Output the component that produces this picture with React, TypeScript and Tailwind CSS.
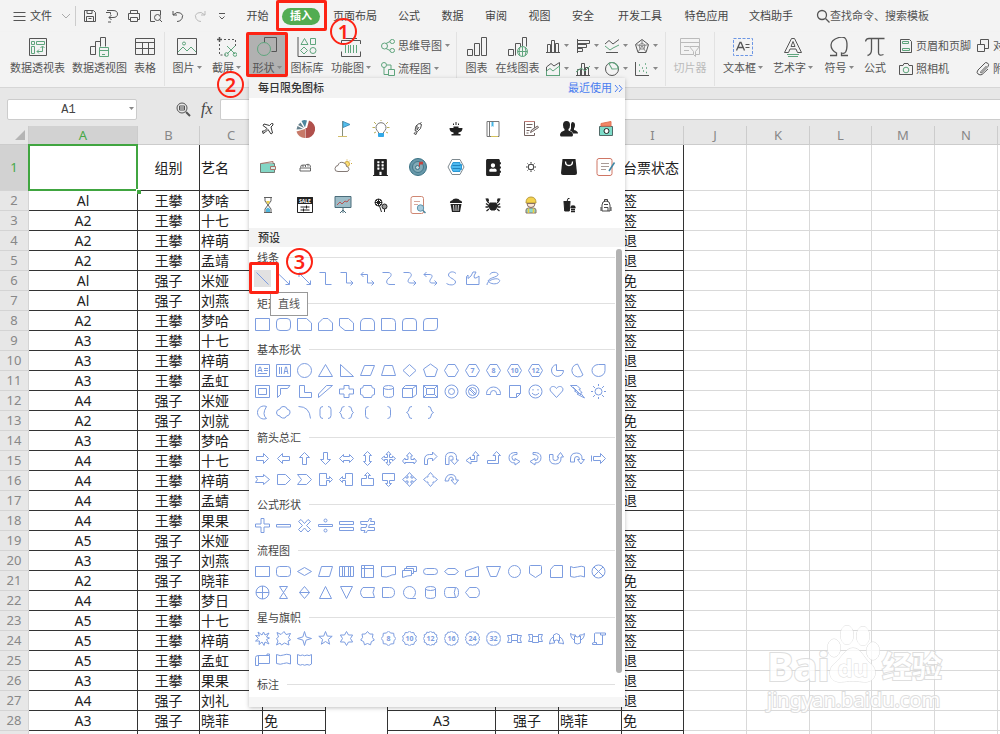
import type { ReactNode } from 'react';
import clsx from 'clsx';
import { FaAddressBook, FaBuilding } from 'react-icons/fa';

const DARK = '#555';
const GREEN = '#5fa57d';
const BLUE = '#7d9de0';

function Icon({ size = 20, color = DARK, children }: { size?: number; color?: string; children: ReactNode }) {
  return (
    <svg width={size} height={size} viewBox={`0 0 ${size} ${size}`} fill="none" stroke={color} className="shrink-0" aria-hidden="true">
      {children}
    </svg>
  );
}

function Caret() {
  return (
    <svg width="5" height="4" viewBox="0 0 5 4" className="shrink-0" aria-hidden="true">
      <path d="M0 0h5L2.5 3z" fill="#888" />
    </svg>
  );
}

function Step({ n, className }: { n: number; className: string }) {
  return (
    <span
      className={clsx(
        'absolute z-30 flex size-[27px] items-center justify-center rounded-full border-2 border-[#fd2314] text-xl leading-none font-semibold text-[#fd2314]',
        className,
      )}
    >
      {n}
    </span>
  );
}

/* ---------- shape gallery ---------- */

type Shape = { d: string; t?: string; r?: number };

const s = (d: string, t?: string): Shape => ({ d, t });
const turn = (d: string, r: number): Shape => ({ d, r });

function star(points: number, outer: number, inner: number) {
  const out: string[] = [];
  for (let i = 0; i < points * 2; i++) {
    const radius = i % 2 ? inner : outer;
    const a = (Math.PI * i) / points - Math.PI / 2;
    out.push(`${(7.5 + radius * Math.cos(a)).toFixed(1)} ${(7.5 + radius * Math.sin(a)).toFixed(1)}`);
  }
  return `M${out.join('L')}z`;
}

const circle = (r: number, cx = 7.5, cy = 7.5) => `M${cx - r} ${cy}a${r} ${r} 0 1 0 ${r * 2} 0a${r} ${r} 0 1 0 ${-r * 2} 0z`;

const RECT = 'M.5 1.5h14v12H.5z';
const ROUND = 'M4 1.5h7q3.5 0 3.5 3.5v5q0 3.5-3.5 3.5H4Q.5 13.5.5 10V5Q.5 1.5 4 1.5z';
const HEX = 'M4 1.5h7l3.5 6-3.5 6H4l-3.5-6z';
const ARROW = 'M1.5 5.5h7v-3l5 5-5 5v-3h-7z';
const DOUBLE = 'M.5 7.5l4-4v2h6v-2l4 4-4 4v-2h-6v2z';
const BEND = 'M1.5 13.5V9q0-5.500 5-5.500h3V1l4.500 4.500L9.500 10V7.500h-3q-2 0-2 1.500v4.500z';
const UTURN = 'M1.5 13.5V6.500q0-5 5.500-5t5.500 5V9H14.500L10.500 13.500 6.500 9h2.500V6.500q0-1.500-2-1.500t-2 1.500v7z';
const CURVE = 'M1 9q1-6.5 6-6.5T12 8h2.5L11 12.500 7 8h2.500q-.5-3-2.500-3T4.500 9z';
const UPBEND = 'M1.5 9.5h8v-5H7L10.500.5l4 4h-2v8h-11z';
const CAN = 'M2.5 3.5q0-2 5-2t5 2-5 2-5-2v8q0 2 5 2t5-2v-8';
const RIBBON = 'M4.5 3.5h6v6h-6zM4.5 4.5H.5l1.500 3.500-1.500 3.500h4V9.500M10.500 4.500h4L13 8l1.500 3.500h-4V9.500';
const CALLOUT = 'M1.5 1.5h7v5h3v-2l3 3-3 3v-2h-3v5h-7z';

const sections: { title: string; shapes: Shape[] }[] = [
  {
    title: '线条',
    shapes: [
      s('M1.5 1.5l12 12'),
      s('M1 1.5l12.5 12M13.500 9.500v4h-4'),
      s('M2 2l11.5 11.5M13.500 9.500v4h-4M2 6V2h4'),
      s('M1.5 1.5h6v12h6'),
      s('M1.5 1.5h6v10.500H14M11.500 9.500L14 12l-2.500 2.500'),
      s('M1 3.5h6.500V12H14M3.500 1L1 3.500 3.500 6M11.500 9.500L14 12l-2.500 2.500'),
      s('M1.5 1.5H7c4 0 4 3.500 1 5.500s-3.500 6.500 1 6.500h5'),
      s('M1.5 1.5H6c4 0 4 3 2 5s-3.500 5.500 1 5.500h5M11.500 9.500L14 12l-2.500 2.500'),
      s('M1 3.5h5c4 0 3.500 2 2 4s-2 4.500 1 4.500h5M3.500 1L1 3.500 3.500 6M11.500 9.500L14 12l-2.500 2.500'),
      s('M12 2.5C9-.5 4.500 1 4.500 4s7 4 7 7-5 4-9 1.500'),
      s('M1.5 13.5V5.500L3 4v3.500L6 5 8 1h3L9 5q0 3 2 2t3-2v8.500z'),
      s('M4 3.5C5 0 13 1 12 4c-1 2-9 3-10 6 1 2 6 4 10 2 4-3 0-5-4-4s-7 3-7 6'),
    ],
  },
  {
    title: '矩形',
    shapes: [
      s(RECT),
      s(ROUND),
      s('M.5 1.5h9l5 4.500v7.500H.5z'),
      s('M.5 6L5 1.500h5L14.500 6v7.500H.5z'),
      s('M.5 1.5h9l5 4.500v7.500H6L.5 9z'),
      s('M.5 6Q1 1.500 5 1.500h5q4 0 4.500 4.500v7.500H.5z'),
      s('M.5 1.5h10q4 0 4 4v8H.5z'),
      s('M.5 13.5V5Q.5 1.500 4 1.500h7q3.500 0 3.500 3.500v8.500z'),
      s('M4 1.5h10.500V10q0 3.500-3.500 3.500H.5V5Q.5 1.500 4 1.500z'),
    ],
  },
  {
    title: '基本形状',
    shapes: [
      s('M.5 1.5h14v12H.5zM9 5.500h4M9 7.500h4M3 10.500h9M3 9l1.500-5h1L7 9M3.500 7.500h3'),
      s('M.5 1.5h14v12H.5zM3.500 4v7M5.500 4v7M8 11l1.500-7h1L12 11M8.500 8.500h3'),
      s(circle(7)),
      s('M7.5 1.5l7 12H.5z'),
      s('M1.5 1.5v12h13z'),
      s('M4.5 2.5h10l-4 10H.5z'),
      s('M3.5 2.5h8l3 10H.5z'),
      s('M7.5 1.5l6.500 6-6.500 6-6.500-6z'),
      s('M7.5 1l7 5-2.500 7.500H3L.5 6z'),
      s(HEX),
      s(HEX, '7'),
      s(HEX, '8'),
      s(HEX, '10'),
      s(HEX, '12'),
      s('M7.5 1.5a6 6 0 1 0 7 6h-7z'),
      s('M7.5 1a6.500 6.500 0 1 0 5.500 11z'),
      s('M7.5 1.5h6.500V7.500a6.500 6 0 1 1-6.500-6z'),
      s('M.5 1.5h14v12H.5zM3.500 4.500h8v6h-8z'),
      s('M1.5 13.5v-12h12.500l-2.500 3h-7v6z'),
      s('M2.5 1.5v12h12v-5h-7v-7z'),
      s('M.5 13.5V10l8-8.500h6z'),
      s('M5 1.5h5V5h4.500v5H10v3.500H5V10H.5V5H5z'),
      s('M3.5 1.5h8q0 3 3 3v6q-3 0-3 3h-8q0-3-3-3v-6q3 0 3-3z'),
      s(CAN),
      s('M.5 4.5h10v9H.5zM.5 4.5l3-3h11v9l-4 3M10.500 4.500l4-3'),
      s('M.5 1.5h14v12H.5zM3.500 4.500h8v6h-8zM.5 1.500l3 3M14.500 1.500l-3 3M.5 13.500l3-3M14.500 13.500l-3-3'),
      s(circle(6.5) + circle(3)),
      s(circle(6.5) + circle(4) + 'M5 4l6 6M4 5l6 6'),
      s('M.5 10.5v-1a7 6.500 0 0 1 14 0v1h-4v-1a3 3 0 0 0-6 0v1z'),
      s('M2.5 1.5h11v8l-4 4h-7zM9.500 13.500v-4h4'),
      s(circle(6.5) + 'M5 5v1.500M10 5v1.500M4 9q3.500 4 7 0'),
      s('M7.5 13.5L1.500 7C-.5 3 5 .5 7.500 4.500 10 .5 15.500 3 13.500 7z'),
      s('M.5 1.5h6.500L10.500 5 9 5.500l3 3-1.500.5 4 5L7 10l1.500-.5-4-2.500 1.500-.5zM3 3l8 8'),
      s(circle(3.5) + 'M7.5 0v2M7.5 13v2M0 7.500h2M13 7.500h2M2 2l2 2M11 11l2 2M13 2l-2 2M2 13l2-2'),
      s('M11.5 1.5a6.500 6.500 0 1 0 0 12Q6.500 9.500 11.500 1.500z'),
      s('M4 4q1-3 4-2.500T11 4q4 1 3 4t-3.500 3q-1 3-4 2T4 11Q1 11 .5 8T4 4z'),
      s('M1.5 1.5q11 0 12 12'),
      s('M5 1.5q-3 0-3 3v6q0 3 3 3M10 1.500q3 0 3 3v6q0 3-3 3'),
      s('M5.5 1.5q-3 0-3 2.500T.5 7.500q2 1 2 3.500t3 2.500M9.500 1.500q3 0 3 2.500t2 3.500q-2 1-2 3.500t-3 2.500'),
      s('M8.5 1.5q-3 0-3 3v6q0 3 3 3'),
      s('M6.5 1.5q3 0 3 3v6q0 3-3 3'),
      s('M10 1.5q-3 0-3 2.500T4.500 7.500Q7 8.500 7 11t3 2.500'),
      s('M5 1.5q3 0 3 2.500t2.500 3.500Q8 8.500 8 11t-3 2.500'),
    ],
  },
  {
    title: '箭头总汇',
    shapes: [
      s(ARROW),
      turn(ARROW, 180),
      turn(ARROW, -90),
      turn(ARROW, 90),
      s(DOUBLE),
      turn(DOUBLE, 90),
      s('M7.5.5L10 3.500H8.500v3h3V5l3 2.500-3 2.500V8.500h-3v3H10l-2.500 3-2.500-3h1.500v-3h-3V10l-3-2.500 3-2.500v1.500h3v-3H5z'),
      s('M7.5 1.5L10.500 5H9v3.500h3V7l2.500 3-2.500 3v-1.500H3V13L.5 10 3 7v1.500h3V5H4.500z'),
      s(BEND),
      s(UTURN),
      s('M10.5.5l3.500 4h-2v6h-6v2.500L1 9.500 5.500 6v2.500h4v-4H7.500z'),
      s(UPBEND),
      s('M10 1.5Q2 1 2 6.500t6 5.500v2l5-3.500-5-3v2q-3 0-3-3t5-3z'),
      s('M5 1.5Q13 1 13 6.500T7 12v2l-5-3.500 5-3v2q3 0 3-3t-5-3z'),
      s('M.5 3.5v4q0 5.500 6 5.500t5.500-7h2.500L11.500 1.500 8 6h1.500q0 3.500-3 3.500T4 7.500v-4z'),
      s('M.5 11V8q0-6 6-6T12 8.500h2.500L11 13 7.500 8.500h2q0-3-2.500-3T4.500 8v3z'),
      s('M.5 4.5v6M2.500 5.500h7v-3l5 5-5 5v-3h-7z'),
      s('M.5 4.5h8v-2l6 5-6 5v-2h-8l2-3z'),
      s('M1.5 2.5h8l5 5-5 5h-8z'),
      s('M.5 2.5h9l5 5-5 5h-9l4-5z'),
      s(CALLOUT),
      s('M13.5 1.5h-7v5h-3V4.500l-3 3 3 3V8.500h3v5h7z'),
      turn(CALLOUT, -90),
      turn(CALLOUT, 90),
      s('M6 4h-1.500L7.500.5l3 3.500H9v2h2V4.500l3.500 3-3.500 3V9H9v2h1.500l-3 3.500-3-3.500H6V9H4v1.500l-3.500-3 3.500-3V6h2z'),
      s('M7.5.5L10 3.500V5h1.500l3 2.500-3 2.500H10v1.500l-2.500 3-2.500-3V10H3.500l-3-2.500 3-2.500H5V3.500z'),
      s(CURVE),
    ],
  },
  {
    title: '公式形状',
    shapes: [
      s('M6 .5h3V6h5.500v3H9v5.500H6V9H.5V6H6z'),
      s('M.5 6.5h14v2.500H.5z'),
      s('M4 1.5l3.500 4 3.500-4 2.500 2-4 4 4 4-2.500 2.500-3.500-4-3.500 4L1.500 11.500l4-4-4-4z'),
      s('M.5 6.5h14v2H.5z' + circle(1.5, 7.5, 2.5) + circle(1.5, 7.5, 12.5)),
      s('M.5 3.5h14v3H.5zM.5 9.500h14v3H.5z'),
      s('M.5 3.5H8l1.500-3h2L10.500 3.500h4v3h-5l-1 3h6v3h-7l-1.500 2.500h-2l1-2.500h-4v-3h5l1-3h-6z'),
    ],
  },
  {
    title: '流程图',
    shapes: [
      s('M.5 2.5h14v10H.5z'),
      s('M3.5 2.5h8q3 0 3 3v4q0 3-3 3h-8q-3 0-3-3v-4q0-3 3-3z'),
      s('M7.5 3.5l7 4-7 4-7-4z'),
      s('M3.5 2.5h11l-3 10H.5z'),
      s('M.5 2.5h14v10H.5zM3.500 2.500v10M5.500 2.500v10M9.500 2.500v10M11.500 2.500v10'),
      s('M1.5 1.5h12v12h-12zM4.500 1.500v12M1.500 4.500h12'),
      s('M.5 2.5h14v8q-4 0-6 1.500t-8 .5z'),
      s('M.5 6.5h9v5q-4 0-9 2zM2.500 6.500v-2h9v5h-2M4.500 4.500v-2h10v5h-3'),
      s('M3.5 4.5h8q3 0 3 3t-3 3h-8q-3 0-3-3t3-3z'),
      s('M4 4.5h7l3.500 3-3.500 3H4l-3.500-3z'),
      s('M.5 7l13-4.500v10H.5z'),
      s('M.5 2.5h14l-4 10h-6z'),
      s(circle(6)),
      s('M2.5 1.5h10q1 0 1 1v7l-6 4-6-4v-7q0-1 1-1z'),
      s('M5 1.5h8.500v12h-12V5.500z'),
      s('M.5 2.5q3 2 7 .5t7 0v10q-4-2-7-.5t-7 0z'),
      s(circle(6.5) + 'M3 3l9 9M12 3l-9 9'),
      s(circle(6.5) + 'M1 7.500h13M7.500 1v13'),
      s('M3.5 1.5h8l-8 12h8z'),
      s('M7.5 1.5l5 6-5 6-5-6zM2.500 7.500h10'),
      s('M7.5 1.5l6 12h-12z'),
      s('M7.5 13.5l6-12h-12z'),
      s('M3 2.5h11.500q-3 5 0 10H3q-5-5 0-10z'),
      s('M1.5 2.5h7q5 0 5 5t-5 5h-7z'),
      s('M14 13.5H7.500a6 6 0 1 1 6-6q0 3-2.500 5'),
      s(CAN),
      s('M3.5 2.5h8q3 0 3 5t-3 5h-8q-3 0-3-5t3-5zM11.500 2.500q-2.500 5 0 10'),
      s('M4.5 2.5h7q3 1 3 5t-3 5h-7l-4-5z'),
    ],
  },
  {
    title: '星与旗帜',
    shapes: [
      s('M7 4l1.500-3L10 4l4-2-2.500 4 3 1-3 1.500L14 13l-4-2-1 3.500L7 11l-3 2.500L4.500 10 .5 10l3-2.500L.5 4.500 4.500 5 3 1z'),
      s('M1 1.5l4 2 3-3 2 3 4.500-1-2 4 2 2.500-2.500 1 1 4-4.500-2-3 2-1.500-2L.5 14 2 10 .5 7.500l2-1.500z'),
      s(star(4, 7, 2.2)),
      s(star(5, 7, 3)),
      s(star(6, 7, 4)),
      s(star(7, 7, 5)),
      s(star(8, 7.3, 6), '8'),
      s(star(10, 7.3, 6.2), '10'),
      s(star(12, 7.3, 6.2), '12'),
      s(star(12, 7.3, 6.4), '16'),
      s(star(14, 7.3, 6.4), '24'),
      s(star(16, 7.3, 6.6), '32'),
      s(RIBBON),
      turn(RIBBON, 180),
      s('M4.5 4q3-3 6 0v6q-3-2-6 0zM4.500 6Q1 7 .5 13q2-1 5-1v-2M10.500 6Q14 7 14.500 13q-2-1-5-1v-2'),
      s('M4.5 5q3 2 6 0v7q-3 2-6 0zM4.500 9Q1 8 .5 2.500q2 2 5 1.500v1.500M10.500 9Q14 8 14.500 2.500q-2 2-5 1.500v1.500'),
      s('M4.5 2h10v2h-3v9.500h-10q-1-2 2-2v-9zM3.500 11.500h2v2M11.500 4h-2V2'),
      s('M3.5 3.5h11v8h-11zM.5 5.500q0-2 3-2v10H.5zM12 3.500V2h2.500v1.500'),
      s('M.5 2.5q4 2 7 .5t7 0v9q-4-2-7-.5t-7 0z'),
      s('M.5 2.5q3 2 5 .5 2 1.500 4.500 0 2 1.500 4.500-.5v9.500q-2 2-4.500.5-2.500 1.500-4.500 0-2 1.500-5-.5z'),
    ],
  },
  { title: '标注', shapes: [] },
];

function ShapeIcon({ shape }: { shape: Shape }) {
  return (
    <svg width="15" height="15" viewBox="0 0 15 15" fill="none" stroke={BLUE} className="shrink-0" aria-hidden="true">
      <path d={shape.d} transform={shape.r ? `rotate(${shape.r} 7.5 7.5)` : undefined} />
      {shape.t && (
        <text x="7.5" y="10" textAnchor="middle" fontSize="7" fontWeight="700" fill={BLUE} stroke="none">
          {shape.t}
        </text>
      )}
    </svg>
  );
}

/* ---------- free icons of the day, 20 x 20 each ---------- */

const K = '#222';
const dailyIcons: ReactNode[] = [
  <Icon color={K}><path d="M5 14.500l2.500-1.500L10 10.500l3 4.500 1.500-1-1.500-6 2-2q.5-2-1.500-1.500l-2 2L6 5 5 6.500 9 9.500 6.500 12 4.500 12z" strokeWidth=".9" /></Icon>,
  <Icon color="none">
    <path d="M12 9l2-7.500A9 9 0 0 1 10.500 19V9z" fill="#b0504c" />
    <path d="M10 10v9a8.500 8.500 0 0 1-8.500-6.500z" fill="#c77968" />
    <path d="M10 8.500L6.500 2Q9 .5 12 1.500z" fill="#4c869e" />
    <path d="M9 9L5.500 3.500 3 6zM8 10L2.500 7l-1 3.500z" fill="#66808c" />
  </Icon>,
  <Icon color="#89907c"><path d="M9.500 2v15" /><path d="M10 2.500l7 3-7 3z" fill="#52c0ee" stroke="#4793bd" /><path d="M5 17.500h9" stroke="#d2bd6b" /></Icon>,
  <Icon color="#777"><path d="M7.500 14.500V13a5 5 0 1 1 5 0v1.500z" /><path d="M7.500 14.500h5v3h-5z" fill="#33a9e7" stroke="#33a9e7" /><path d="M1.500 8.500H4M16 8.500h2.500M3 3l2 2M17 3l-2 2M3 14l2-1M17 14l-2-1M10 1v1" stroke="#b9ae5a" /></Icon>,
  <Icon color={K}><path d="M8 7l3-2.500 2.500 1-1 4-3 3-2.500-1zM12 4.500l1.500-1M8 12.500l-2 2 2 1 1-2.500M9 6.500v4M11 8l-2 3" strokeWidth=".8" /></Icon>,
  <Icon color="none"><path d="M3.500 9h4V7.500h5V9h4q0 4-4 4.500v1.500h2V16.500H5.500V15h2v-1.500q-4-.5-4-4.500z" fill={K} /><path d="M10 3v3M7.500 4.500v1.500M12.500 4.500v1.500" stroke={K} /></Icon>,
  <Icon color="#777"><path d="M4 2.500h12v15H4zM6.500 2.500v15" /><path d="M8.500 3h2v5l-1-1-1 1z" fill="#46b5e4" stroke="none" /><path d="M8 17.500h7" stroke="#d4c15a" /></Icon>,
  <Icon color="#71605e"><path d="M13.500 9V2.500h-10v14h10V14M5.500 5.500h6M5.500 8.500h5M5.500 11.500h3M5.500 14h2" /><path d="M3.500 2.500h10" stroke="#c47b75" /><path d="M9.500 13.500l1-2.500 6-4 1 1.500-6 4z" fill="#ddd" /></Icon>,
  <Icon color="none">
    <path d="M13 3q3 0 3 3 0 2.500-1 3.500v1.500q4 1 4 3.500h-5q-.5-2-3-3l1-2V5z" fill={K} />
    <path d="M7.500 2q3.500 0 3.500 4 0 3-1.500 4v1.500q4 1 4.500 4 0 2-1 2H2q-1 0-1-2 .5-3 4.500-4V10Q4 9 4 6q0-4 3.500-4z" fill={K} />
  </Icon>,
  <Icon color="#516a68"><path d="M3.500 7.500h13v9h-13z" fill="#7edcc9" /><path d="M5 7V4.500l10-2V7z" fill="#f18667" stroke="#e27557" /><circle cx="10.500" cy="12" r="2.500" fill="#fff" stroke={K} /></Icon>,
  <Icon color="#727b73"><path d="M2.500 6.500h14v9h-14z" fill="#83d6c5" /><path d="M3 6.500l12-2v2M12.500 9.500h5v3h-5z" fill="#d7efe9" stroke="#a9746a" /></Icon>,
  <Icon color="#555"><path d="M5 11h10.500v3H5zM5.500 10.500q0-3 3-2.500t3-.5q4-1 4 3M8 8v2M10.500 8v2M13 7.500v2" strokeWidth=".9" /></Icon>,
  <Icon color="#837975"><circle cx="14" cy="7" r="2.500" fill="#ffe178" stroke="#d0ab42" /><path d="M5 14.500q-3.500 0-3-3t3-3q1-4 5-3t3.500 4q3 .5 2.500 3t-3 2z" fill="#fff" /><path d="M14 2.500v1M18 6.500h1M17 3.500l-1 1" stroke="#d0ab42" /></Icon>,
  <FaBuilding size={17} color={K} />,
  <Icon color="#397184"><circle cx="10" cy="10" r="8.500" fill="#6798a9" /><circle cx="10" cy="10" r="5.500" fill="#83abb7" stroke="#43778a" /><circle cx="9.500" cy="10.500" r="2" fill="#c6d9de" /><path d="M11.500 9.500V5.500l3-.5v2h-2.500" fill="#c4433e" stroke="#c4433e" /></Icon>,
  <Icon color="#7f8a90"><path d="M6 2.500h8l4 7.500-4 7.500H6L2 10z" /><path d="M7 5.500h7v2h1.500v5H14v2H7l-2-4.500z" fill="#4bb8ef" stroke="#2b98d4" /><path d="M6.500 8.500h8M6.500 11.500h8" stroke="#2183bd" /></Icon>,
  <FaAddressBook size={17} color={K} />,
  <Icon color="#333"><circle cx="10" cy="10" r="2.800" /><path d="M10 5v1.500M10 13.500V15M5 10h1.500M13.500 10H15M6.500 6.500l1 1M12.500 12.500l1 1M13.500 6.500l-1 1M7.500 12.500l-1 1" /></Icon>,
  <Icon color="none"><path d="M3.500 2h13l1.500 14q0 2-2 2H4q-2 0-2-2z" fill={K} /><path d="M6.500 4.500q0 4 3.500 4t3.500-4" stroke="#fff" strokeWidth="1.300" /></Icon>,
  <Icon color="#cf7665"><path d="M3 1.500h11q2 0 2 2v13q0 2-2 2H3q-2 0-2-2v-13q0-2 2-2z" /><path d="M5 6.500h8M5 9.500h8M5 12.500h5" stroke="#a99b97" /><path d="M18.500 5.500L13 14" stroke="#3e87a5" strokeWidth="1.500" /></Icon>,
  <Icon color="#606060"><path d="M6 2.500h8M6 17.500h8M7 3v3l3 4-3 4v3M13 3v3l-3 4 3 4v3" /><path d="M8 6h4l-2 3.500z" fill="#ecd14e" stroke="none" /><path d="M8 14l2-1.500 2 1.500v3H8z" fill="#50b7dd" stroke="none" /></Icon>,
  <Icon color={K}>
    <path d="M2.500 2.500h15v15h-15z" /><path d="M2.500 2.500h15v6h-15z" fill={K} />
    <path d="M5.500 12h9M5.500 15h9M11.500 10.500v3M8.500 13.500v3" />
    <text x="10" y="8" textAnchor="middle" fontSize="5" fontWeight="700" fill="#fff" stroke="none">SALE</text>
  </Icon>,
  <Icon color="#4b6d7b"><path d="M2 1.500h16v11H2z" fill="#9dbdc8" /><path d="M4 10l3-3 2 2 3-3 2 1 2.500-3" stroke="#b85452" /><path d="M10 12.500V18M7 18l3-3 3 3" /></Icon>,
  <Icon color={K}><circle cx="7.500" cy="7.500" r="3.500" /><path d="M4 7.500h7M7.500 4v7M5 5l5 5M10 5l-5 5M8.500 11l2 6" /><circle cx="13.500" cy="11.500" r="2.500" fill="#999" /><path d="M13.500 14v3" /></Icon>,
  <Icon color="#cf8773"><path d="M5 1.500h8.500q2 0 2 2V17q0 1.500-2 1.500H5q-2 0-2-1.500V3.500q0-2 2-2z" /><path d="M6 6.500h6M6 9.500h4" stroke="#d7a79b" /><circle cx="12.500" cy="13" r="3.200" fill="#a8cbdc" stroke="#5f96ae" /><path d="M15 15.500l2.500 2.500" stroke="#4d88a0" strokeWidth="1.500" /></Icon>,
  <Icon color="none"><path d="M4 8q-.5-2 2-2.500Q7 3.500 10 3.500t4 2Q16.500 6 16 8z" fill={K} /><path d="M4.500 9h11L14 17H6z" fill={K} /><path d="M7.500 10l.5 6M10 10v6M12.500 10l-.5 6" stroke="#fff" strokeWidth=".8" /></Icon>,
  <Icon color={K}><path d="M7 8h6l2 3-3 4H8l-3-4z" fill={K} /><path d="M5 10L3 8.500M5 12H2.500M6 14l-2.500 2M15 10l2-1.500M15 12h2.500M14 14l2.500 2M6 8L4 6M14 8l2-2" strokeWidth="1.300" /><path d="M3 3.500q0 3 2.500 2.500L5 3.500M17 3.500q0 3-2.500 2.500L15 3.500" fill={K} /></Icon>,
  <Icon color="#8a7165"><path d="M5 8q0-6 5-6T15 8z" fill="#f4d24d" stroke="#b99a3a" /><path d="M6 8.500h8q0 4-4 4t-4-4z" fill="#fbe6d2" /><path d="M5 18v-3q0-2 3-2h4q3 0 3 2v3z" fill="#8ed7cf" /><path d="M7.500 13.500V18M12.500 13.500V18" stroke="#eecb3f" strokeWidth="1.500" /></Icon>,
  <Icon color={K}><path d="M5 7h6l-.7 9H5.700z" fill={K} /><path d="M4.500 6.500h7M8 6.500l1-3h1.500" /><path d="M12 12.500q0-1.500 2-1.500t2 1.500zM12 14.500h4M12 16.500h4" strokeWidth="1.300" /></Icon>,
  <Icon color="#333"><path d="M6 16V10q0-4 4-4t4 4v6zM8.500 6V4.500h3V6M8 12.500h4V16M5 12v4M15 12v4M8 9.500h4" strokeWidth=".9" /></Icon>,
];

function ShapeMenu() {
  return (
    <div className="absolute top-[46px] left-[3px] z-20 w-[376px] bg-white shadow-[0_1px_4px_rgba(0,0,0,0.25)]">
      <div className="flex h-5 items-center justify-between bg-[#f3f3f3] pr-0.5 pl-[9px]">
        <h2 className="font-medium text-[#333]">每日限免图标</h2>
        <a href="#recent" className="flex items-center gap-0.5 text-[#4a7df0]">
          最近使用
          <Icon size={9} color="#4a7df0"><path d="M1 1l3 3.500L1 8M5 1l3 3.500L5 8" /></Icon>
        </a>
      </div>
      <div className="grid grid-cols-10 pt-3 pb-1">
        {dailyIcons.map((icon, i) => (
          <button key={i} type="button" className="flex h-[38px] items-center justify-center" aria-label={`图标 ${i + 1}`}>
            {icon}
          </button>
        ))}
      </div>
      <h2 className="flex h-[19px] items-center bg-[#f3f3f3] pl-[9px] font-medium text-[#333]">预设</h2>
      <div className="flex h-[450px] overflow-hidden">
        <div className="flex-1 pl-[3px]">
          {sections.map((section, i) => (
            <section key={section.title} className="pb-1">
              <div className="flex h-[21px] items-center gap-2 pl-[5px]">
                <h3 className="text-[#444]">{section.title}</h3>
                <span className="h-px flex-1 bg-[#e0e0e0]" />
              </div>
              <div className="grid grid-cols-[repeat(17,21px)]">
                {section.shapes.map((shape, j) => {
                  const current = i === 0 && j === 0;
                  return (
                    <div key={j} className="relative">
                      <button
                        type="button"
                        aria-label={`${section.title} ${j + 1}`}
                        className={clsx('flex size-[21px] items-center justify-center', current && 'border-2 border-white bg-[#e1e1e1]')}
                      >
                        <ShapeIcon shape={shape} />
                      </button>
                      {current && (
                        <>
                          <span className="absolute -top-1.5 -left-[3px] z-20 h-8 w-[30px] rounded-xs border-[3px] border-[#fd2314]" />
                          <span role="tooltip" className="absolute top-6 left-[18px] z-10 border border-[#999] bg-white px-[7px] py-[5px] leading-3 whitespace-nowrap text-[#555]">
                            直线
                          </span>
                        </>
                      )}
                    </div>
                  );
                })}
              </div>
            </section>
          ))}
        </div>
        <div className="mt-0.5 mr-[3px] ml-px h-[424px] w-1.5 rounded-full bg-[#b3b3b3]" />
      </div>
      <div className="h-2.5 bg-[#f6f6f6]" />
      <Step n={3} className="top-[170px] left-[37px]" />
    </div>
  );
}

/* ---------- menu bar ---------- */

const quickActions: [string, ReactNode][] = [
  ['保存', <Icon size={14}><path d="M1.500 1.500h9l2 2v9h-11zM4 1.500v3h5v-3M3.500 12.500v-5h7v5M5.500 9.500h3" /></Icon>],
  ['输出', <Icon size={14}><path d="M2 1.500h6q4.500 0 4.500 3.500T8 8.500H4M6.500 6L4 8.500 6.500 11M1 3.500h4.500v2M3 13h3" /></Icon>],
  ['打印', <Icon size={14}><path d="M3.500 4.500v-3h7v3M3.500 10.500h-2v-6h11v6h-2M3.500 8.500h7v4h-7z" /></Icon>],
  ['打印预览', <Icon size={14}><path d="M6 12.500H1.500v-11h10v5" /><circle cx="8.500" cy="8.500" r="3" /><path d="M10.500 10.500l2.500 2.500" /></Icon>],
  ['撤销', <Icon size={14}><path d="M2 2v4h4M2 6q4-4 7.500-2T11 9.500 6 12.500" /></Icon>],
  ['恢复', <Icon size={14} color="#bbb"><path d="M12 2v4H8M12 6Q8 2 4.500 4T3 9.500t5 3" /></Icon>],
  ['更多', <Icon size={14}><path d="M4 4.500h6M4.500 7.500L7 10l2.500-2.500" /></Icon>],
];

const tabs: { name: string; width: string; active?: boolean }[] = [
  { name: '开始', width: 'w-[43px]' },
  { name: '插入', width: 'w-[44px]', active: true },
  { name: '页面布局', width: 'w-[64px]' },
  { name: '公式', width: 'w-[44px]' },
  { name: '数据', width: 'w-[43px]' },
  { name: '审阅', width: 'w-[44px]' },
  { name: '视图', width: 'w-[43px]' },
  { name: '安全', width: 'w-[44px]' },
  { name: '开发工具', width: 'w-[70px]' },
  { name: '特色应用', width: 'w-[63px]' },
  { name: '文档助手', width: 'w-[66px]' },
];

function MenuBar() {
  return (
    <nav className="flex h-8 items-center text-[#444]">
      <button type="button" className="ml-3 flex shrink-0 items-center gap-[3px]">
        <Icon size={15}><path d="M1.500 3.500h12M1.500 7.500h12M1.500 11.500h12" /></Icon>
        文件
        <Icon size={18} color="#aaa"><path d="M7 7l4 4 4-4" /></Icon>
      </button>
      <div className="ml-0.5 h-5 w-px bg-[#ccc]" />
      <div className="ml-[3px] flex w-[157px] shrink-0">
        {quickActions.map(([label, icon]) => (
          <button key={label} type="button" aria-label={label} className="flex w-[22px] justify-center">
            {icon}
          </button>
        ))}
      </div>
      {tabs.map((tab) => (
        <div key={tab.name} className={clsx('relative flex h-8 shrink-0 items-center justify-center', tab.width)}>
          <button type="button" className={clsx('whitespace-nowrap', tab.active && 'h-[17px] w-[38px] rounded-full bg-[#52ac52] font-bold text-white')}>
            {tab.name}
          </button>
          {tab.active && (
            <>
              <span className="absolute top-0 -left-[3px] z-20 h-[31px] w-[51px] rounded-xs border-[3px] border-[#fd2314]" />
              <Step n={1} className="top-[18px] left-[51px]" />
            </>
          )}
        </div>
      ))}
      <label className="ml-3 flex min-w-0 flex-1 items-center">
        <Icon size={14}><circle cx="6" cy="6" r="4.500" strokeWidth="1.300" /><path d="M9.500 9.500l4 4" strokeWidth="1.300" /></Icon>
        <input className="min-w-0 flex-1 bg-transparent placeholder:text-[#555]" placeholder="查找命令、搜索模板" aria-label="搜索" />
      </label>
    </nav>
  );
}

/* ---------- ribbon ---------- */

function Tool({ label, width, caret, disabled, active, children }: { label: string; width: string; caret?: boolean; disabled?: boolean; active?: boolean; children: ReactNode }) {
  return (
    <button
      type="button"
      disabled={disabled}
      className={clsx(
        'flex h-[45px] shrink-0 flex-col items-center gap-[5px]',
        width,
        disabled ? 'text-[#bbb]' : 'text-[#555]',
        active ? 'rounded-xs border-[3px] border-[#fd2314] bg-[#b1b1b1] pt-0.5' : 'pt-[5px]',
      )}
    >
      <Icon color={disabled ? '#bbb' : DARK}>{children}</Icon>
      <span className="flex items-center gap-0.5 leading-3 whitespace-nowrap">
        {label}
        {caret && <Caret />}
      </span>
    </button>
  );
}

function SmallTool({ label, caret, children }: { label: string; caret?: boolean; children: ReactNode }) {
  return (
    <button type="button" className="flex h-[23px] items-center gap-[3px] whitespace-nowrap text-[#555]">
      <Icon size={14}>{children}</Icon>
      {label}
      {caret && <Caret />}
    </button>
  );
}

const chartTypes: [string, ReactNode][] = [
  ['柱形图', <path d="M0 13.500h14M1.500 13V5.500h3V13M5.500 13V1.500h3V13M9.500 13V4.500h3V13" />],
  ['条形图', <path d="M1.500 0v14M1.500 1.500h12v3h-12M1.500 5.500h9v3h-9M1.500 9.500h5v3h-5" />],
  ['折线图', <><path d="M0 5l4-3.500 4 3.500 6-4.500M1 13.500h12" /><path d="M0 7l5 4 3-2 6-3" stroke={GREEN} /></>],
  ['雷达图', <><path d="M7 .5l6.500 5L11 13.500H3L.5 5.500z" /><path d="M7 4l3 2-1 4H5L4 6zM7 .5V7L3 13M7 7l4 6M.5 5.500L7 7l6.500-1.500" stroke="#888" /></>],
  ['面积图', <><path d="M.5 5L5 1.500 8 4l5.500-3.500v13H.500z" /><path d="M.5 9L4 6.500 7 9l6.500-5v9.500H.5z" stroke={GREEN} /></>],
  ['组合图', <><path d="M0 13.500h14M1.500 13V7.500h3V13M5.500 13V1.500h3V13M9.500 13V5.500h3V13" /><path d="M0 10l5-4 4 3 5-5" stroke={GREEN} /></>],
  ['饼图', <><circle cx="7" cy="7" r="6.500" stroke={DARK} /><path d="M7 .5V7l5.500 3A6.500 6.500 0 0 0 7 .5z" stroke={GREEN} transform="rotate(-30 7 7)" /></>],
  ['散点图', <><path d="M.5 0v13.500H14" /><path d="M4 3h1M10 2h1M7 6h1M4 9h1M11 6h1M8 9h1M11 10.500h1" stroke={GREEN} strokeWidth="1.500" /></>],
];

function Separator({ className }: { className?: string }) {
  return <div className={clsx('h-[54px] w-px shrink-0 bg-[#e2e2e2]', className)} />;
}

function Ribbon() {
  return (
    <div className="flex h-14 items-start border-b border-[#d6d6d6] pl-1.5 shadow-[0_1px_2px_rgba(0,0,0,0.1)]">
      <Tool label="数据透视表" width="w-[63px]">
        <path d="M1.500 1.500h17v17h-17z" /><path d="M8.500 4.500h8v3h-8zM3.500 4.500h3v3h-3zM3.500 9.500h3v7h-3zM9 14.500h5.500v-5M11 12.500l-2 2 2 2M12.500 11l2-2 2 2" stroke={GREEN} />
      </Tool>
      <Tool label="数据透视图" width="w-[61px]">
        <path d="M.5 17.500v-8h5v8zM5.500 17.500v-13h5v5M10.500 8.500v-8h5v9" /><path d="M9.500 10.500h9v9h-9zM9.500 13.500h9M12 17.500h3" stroke={GREEN} />
      </Tool>
      <Tool label="表格" width="w-[30px]">
        <path d="M.5 1.500h19v16H.5zM.5 5.500h19M.5 11.500h19M7.500 5.500v12M13.500 5.500v12" />
      </Tool>
      <Separator className="mr-0.5 ml-1" />
      <Tool label="图片" width="w-[40px]" caret>
        <path d="M.5 1.500h19v16H.5z" /><circle cx="7" cy="6.500" r="1.500" stroke={GREEN} /><path d="M1 15l5-5 4 4 4-4 5 5" stroke={GREEN} />
      </Tool>
      <Tool label="截屏" width="w-[39px]" caret>
        <path d="M2.500 0v5M0 2.500h5" strokeWidth="1.500" /><path d="M7 2.500h11.500V10M2.500 7v11H9" strokeDasharray="2 2" /><path d="M10 9l8 8M18 9l-8 8" stroke={GREEN} /><circle cx="9.500" cy="17.500" r="1.800" stroke={GREEN} /><circle cx="18" cy="17.500" r="1.800" stroke={GREEN} />
      </Tool>
      <div className="relative">
        <Tool label="形状" width="w-[42px]" caret active>
          <path d="M7.500 5.500v-5h12v14h-5" /><circle cx="7" cy="12" r="6.500" stroke={GREEN} />
        </Tool>
        <Step n={2} className="top-[39px] -left-[29px]" />
        <ShapeMenu />
      </div>
      <Tool label="图标库" width="w-[38px]">
        <path d="M1 0v19.500h18" /><path d="M7.500 1.500l3.500 6H4zM13.500 1.500h5v6h-5zM7 10l3.500 3.500L7 17l-3.500-3.500z" stroke={GREEN} /><circle cx="16" cy="13.500" r="3" stroke={GREEN} />
      </Tool>
      <Tool label="功能图" width="w-[50px]" caret>
        <path d="M.5 7V3.500h19V7M.5 14.500v5h19v-5M4 1.500h12" /><path d="M4.500 8v8M7.500 8v8M9.500 8v8M12.500 8v8M15.500 8v8" stroke={GREEN} />
      </Tool>
      <div className="flex w-20 shrink-0 flex-col pt-0.5 pl-[5px]">
        <SmallTool label="思维导图" caret>
          <circle cx="3.500" cy="7" r="3" stroke={GREEN} /><rect x="9" y=".5" width="4.500" height="4" rx="2" stroke={GREEN} /><rect x="9" y="9.500" width="4.500" height="4" rx="2" stroke={GREEN} /><path d="M5 4.500L9 2.500M5 9.500l4 2" stroke={GREEN} />
        </SmallTool>
        <SmallTool label="流程图" caret>
          <circle cx="3" cy="3" r="2.500" stroke={GREEN} /><path d="M3 5.500v7h4M6 3h4v4M7.500 7.500h6v6h-6z" stroke={GREEN} />
        </SmallTool>
      </div>
      <Separator />
      <Tool label="图表" width="w-[39px]">
        <path d="M.5 18.500v-6h5v6zM7.500 18.500v-12h5v12zM14.500 18.500V.500h5v18z" />
      </Tool>
      <Tool label="在线图表" width="w-[43px]">
        <path d="M.5 18.500v-6h5v6zM7.500 18.500v-12h5V10M14.500 9V.500h4v9" /><circle cx="14.500" cy="14.500" r="5" stroke={GREEN} /><path d="M9.500 14.500h10M14.500 9.500v10M12 10q-2 4.500 0 9M17 10q2 4.500 0 9" stroke={GREEN} />
      </Tool>
      <div className="ml-[7px] grid w-[118px] shrink-0 grid-cols-4 pt-0.5">
        {chartTypes.map(([label, icon]) => (
          <button key={label} type="button" aria-label={label} className="flex h-[23px] items-center gap-1">
            <Icon size={14}>{icon}</Icon>
            <Caret />
          </button>
        ))}
      </div>
      <Separator className="ml-px" />
      <Tool label="切片器" width="w-[48px]" disabled>
        <path d="M.5 1.500h19v16H.5zM.5 5.500h19M4 9.500h5M4 13.500h5" /><path d="M9.500 9.500h10l-4 5v5l-2-2v-3z" fill="#f3f3f3" />
      </Tool>
      <Separator />
      <Tool label="文本框" width="w-[56px]" caret>
        <path d="M.5 1.500h19v17H.5z" stroke="#6c96e4" strokeDasharray="3 1.500" /><path d="M3.500 13.500l3.500-8h1l3.500 8M5 10.500h5" strokeWidth="1.300" /><path d="M12.500 7.500h4M12.500 10.500h4" />
      </Tool>
      <Tool label="艺术字" width="w-[44px]" caret>
        <path d="M1.500 15.500L8.500 1.500h3l7 14h-4l-1.500-3.500H7L5.500 15.500zM8 9.500l2-5 2 5z" /><path d="M4 17.500h12M5 19.500h10" stroke={GREEN} />
      </Tool>
      <Tool label="符号" width="w-[48px]" caret>
        <path d="M1 18.500h6.500V16Q2 13 2 8t8-7.500T18 8t-5.500 8v2.500H19" strokeWidth="1.300" />
      </Tool>
      <Tool label="公式" width="w-[24px]">
        <path d="M.5 4.500Q1 1.500 4 1.500h15.500M6.500 1.500v11q0 5-4 6M13.500 1.500v14q0 4 5 2" strokeWidth="1.300" />
      </Tool>
      <div className="ml-3 flex w-[77px] shrink-0 flex-col pt-0.5">
        <SmallTool label="页眉和页脚">
          <path d="M1.500.500h9l2 2v11h-11z" /><path d="M3.500 2.500h6v2h-6zM3.500 9.500h7v2h-7z" stroke={GREEN} />
        </SmallTool>
        <SmallTool label="照相机">
          <path d="M.5 3.500h3.500l1-2h4l1 2h3.500v9H.5z" /><circle cx="7" cy="8" r="2.800" stroke={GREEN} />
        </SmallTool>
      </div>
      <div className="flex shrink-0 flex-col pt-0.5">
        <SmallTool label="对象" caret>
          <path d="M4.500 5V.500h8v9h-4M1.500 5.500h7v7h-7z" />
        </SmallTool>
        <SmallTool label="附件">
          <path d="M10.500 4L5 9.500q-1 1.500.500 1.500L12 4.500q1.500-2-.500-3.500T8 2L2 8q-2 2.500 0 4t4 .500L12 7" />
        </SmallTool>
      </div>
    </div>
  );
}

function FormulaBar() {
  return (
    <div className="flex h-[38px] items-center bg-[#e7e7e7] pt-1 pl-[7px]">
      <div className="flex h-[21px] w-[130px] shrink-0 items-center rounded-xs border border-[#ccc] bg-white pr-0.5">
        <input aria-label="名称框" defaultValue="A1" className="min-w-0 flex-1 bg-transparent pt-0.5 text-center font-['Liberation_Mono',monospace] text-xs text-[#444]" />
        <Caret />
      </div>
      <button type="button" aria-label="查找" className="ml-[39px]">
        <Icon size={15}><circle cx="6" cy="6" r="5" /><path d="M3.500 4h5v4h-5zM3.500 6h5" /><path d="M10 10l4 4" strokeWidth="2" /></Icon>
      </button>
      <button type="button" className="ml-2.5 font-['Liberation_Serif',serif] text-base leading-none text-[#444] italic">fx</button>
      <input aria-label="编辑栏" className="ml-[7px] h-[21px] min-w-0 flex-1 rounded-l-xs border border-r-0 border-[#ccc] bg-white px-2" />
    </div>
  );
}

/* ---------- sheet ---------- */

const columns: [string, string][] = [
  ['A', 'w-[109px]'],
  ['B', 'w-[62px]'],
  ['C', 'w-[63px]'],
  ['D', 'w-[63px]'],
  ['E', 'w-[62px]'],
  ['F', 'w-[108px]'],
  ['G', 'w-[63px]'],
  ['H', 'w-[63px]'],
  ['I', 'w-[62px]'],
  ['J', 'w-[63px]'],
  ['K', 'w-[63px]'],
  ['L', 'w-[62px]'],
  ['M', 'w-[63px]'],
  ['N', 'w-[63px]'],
];

// A, B, C, I and, where filled in, D, F, G, H
const rows: string[][] = [
  ['', '组别', '艺名', '台票状态'],
  ['Al', '王攀', '梦啥', '签'],
  ['A2', '王攀', '十七', '签'],
  ['A2', '王攀', '梓萌', '退'],
  ['A2', '王攀', '孟靖', '退'],
  ['Al', '强子', '米娅', '免'],
  ['Al', '强子', '刘燕', '签'],
  ['A2', '王攀', '梦哈', '签'],
  ['A3', '王攀', '十七', '签'],
  ['A3', '王攀', '梓萌', '退'],
  ['A3', '王攀', '孟虹', '退'],
  ['A4', '强子', '米娅', '签'],
  ['A2', '强子', '刘就', '免'],
  ['A3', '王攀', '梦哈', '签'],
  ['A4', '王攀', '十七', '签'],
  ['A4', '王攀', '梓萌', '签'],
  ['A4', '王攀', '孟蜻', '退'],
  ['A4', '王攀', '果果', ''],
  ['A5', '强子', '米娅', '签'],
  ['A3', '强子', '刘燕', '签'],
  ['A2', '强子', '晓菲', '免'],
  ['A4', '王攀', '梦日', '签'],
  ['A5', '王攀', '十七', '签'],
  ['A5', '王攀', '梓萌', '签'],
  ['A5', '王攀', '孟虹', '退'],
  ['A3', '王攀', '果果', '退'],
  ['A4', '强子', '刘礼', '退'],
  ['A3', '强子', '晓菲', '免', '免', 'A3', '强子', '晓菲'],
  [],
];

const cell = 'overflow-hidden border-r border-b border-[#333] p-0 leading-[19px] whitespace-nowrap';
const left = 'pl-px text-left';

function Sheet() {
  return (
    <table className="w-full table-fixed border-separate border-spacing-0 text-center text-sm text-[#222]">
      <colgroup>
        <col className="w-[29px]" />
        {columns.map(([name, width]) => (
          <col key={name} className={width} />
        ))}
        <col />
      </colgroup>
      <thead>
        <tr className="h-[19px] bg-[#e7e7e7] text-[13px] leading-[18px] text-[#888]">
          <th className="border-r border-b border-[#ccc] p-0" aria-label="全选">
            <svg width="10" height="10" viewBox="0 0 10 10" className="ml-[15px]" aria-hidden="true">
              <path d="M10 0v10H0z" fill="#b5b5b5" />
            </svg>
          </th>
          {columns.map(([name]) => (
            <th key={name} scope="col" className={clsx('border-r border-b border-[#ccc] p-0 font-normal', name === 'A' && 'bg-[#d2d2d2] text-[#48a848]')}>
              {name}
            </th>
          ))}
          <td className="border-b border-[#ccc] p-0" />
        </tr>
      </thead>
      <tbody>
        {rows.map(([seat, group, name, status, d, f, g, h], i) => (
          <tr key={i} className={i === 0 ? 'h-[46px]' : 'h-5'}>
            <th
              scope="row"
              className={clsx(
                'border-r border-b border-[#d4d4d4] p-0 text-[13px] leading-[19px] font-normal',
                i === 0 ? 'bg-[#d2d2d2] text-[#48a848]' : 'bg-[#e7e7e7] text-[#888]',
              )}
            >
              {group && i + 1}
            </th>
            {i === 0 ? (
              <td className="relative border-r border-b border-[#333] p-0">
                <span className="absolute -inset-px border-2 border-[#40a540]" />
                <span className="absolute -right-1 -bottom-1 size-[5px] border-t border-l border-white bg-[#40a540]" />
              </td>
            ) : (
              <td className={cell}>{seat}</td>
            )}
            <td className={cell}>{group}</td>
            <td className={clsx(cell, left)}>{name}</td>
            <td className={clsx(cell, left)}>{d}</td>
            <td className="border-r border-[#333] p-0" />
            <td className={cell}>{f}</td>
            <td className={cell}>{g}</td>
            <td className={clsx(cell, left)}>{h}</td>
            <td className={clsx(cell, left)}>{status}</td>
            {['J', 'K', 'L', 'M', 'N'].map((c) => (
              <td key={c} className="border-r border-b border-[#d9d9d9] p-0" />
            ))}
            <td className="border-b border-[#d9d9d9] p-0" />
          </tr>
        ))}
      </tbody>
    </table>
  );
}

function Watermark() {
  return (
    <div className="pointer-events-none absolute right-[53px] bottom-[22px] w-[180px] font-bold text-white opacity-80 [-webkit-text-stroke:2px_#d6d6d6] [paint-order:stroke]">
      <div className="flex items-end">
        <span className="w-[60px] text-[40px] leading-9">Bai</span>
        <svg width="54" height="60" viewBox="0 0 54 60" fill="#fff" stroke="#d6d6d6" aria-hidden="true">
          <ellipse cx="7" cy="24" rx="6.500" ry="9" />
          <ellipse cx="20" cy="11" rx="6.500" ry="9.500" />
          <ellipse cx="36" cy="12" rx="6.500" ry="9.500" />
          <ellipse cx="46" cy="27" rx="6.500" ry="9" />
          <path d="M26 24c8 0 10 9 17 15 8 6 7 18-4 19-6 0-8-1-13-1s-8 1-14 1C1 57 1 45 7 40c8-6 11-16 19-16z" />
          <text x="26" y="53" textAnchor="middle" fontSize="24" fontWeight="700">du</text>
        </svg>
        <span className="pl-px text-[30px] leading-9">经验</span>
      </div>
      <div className="pt-1 text-xl leading-6 font-normal">jingyan.baidu.com</div>
    </div>
  );
}

export default function App() {
  return (
    <div className="relative h-screen overflow-hidden bg-white font-['Noto_Sans','Noto_Sans_CJK_SC',sans-serif] text-[11px] leading-4">
      <header className="bg-[#f3f3f3]">
        <MenuBar />
        <Ribbon />
      </header>
      <FormulaBar />
      <Sheet />
      <Watermark />
    </div>
  );
}
